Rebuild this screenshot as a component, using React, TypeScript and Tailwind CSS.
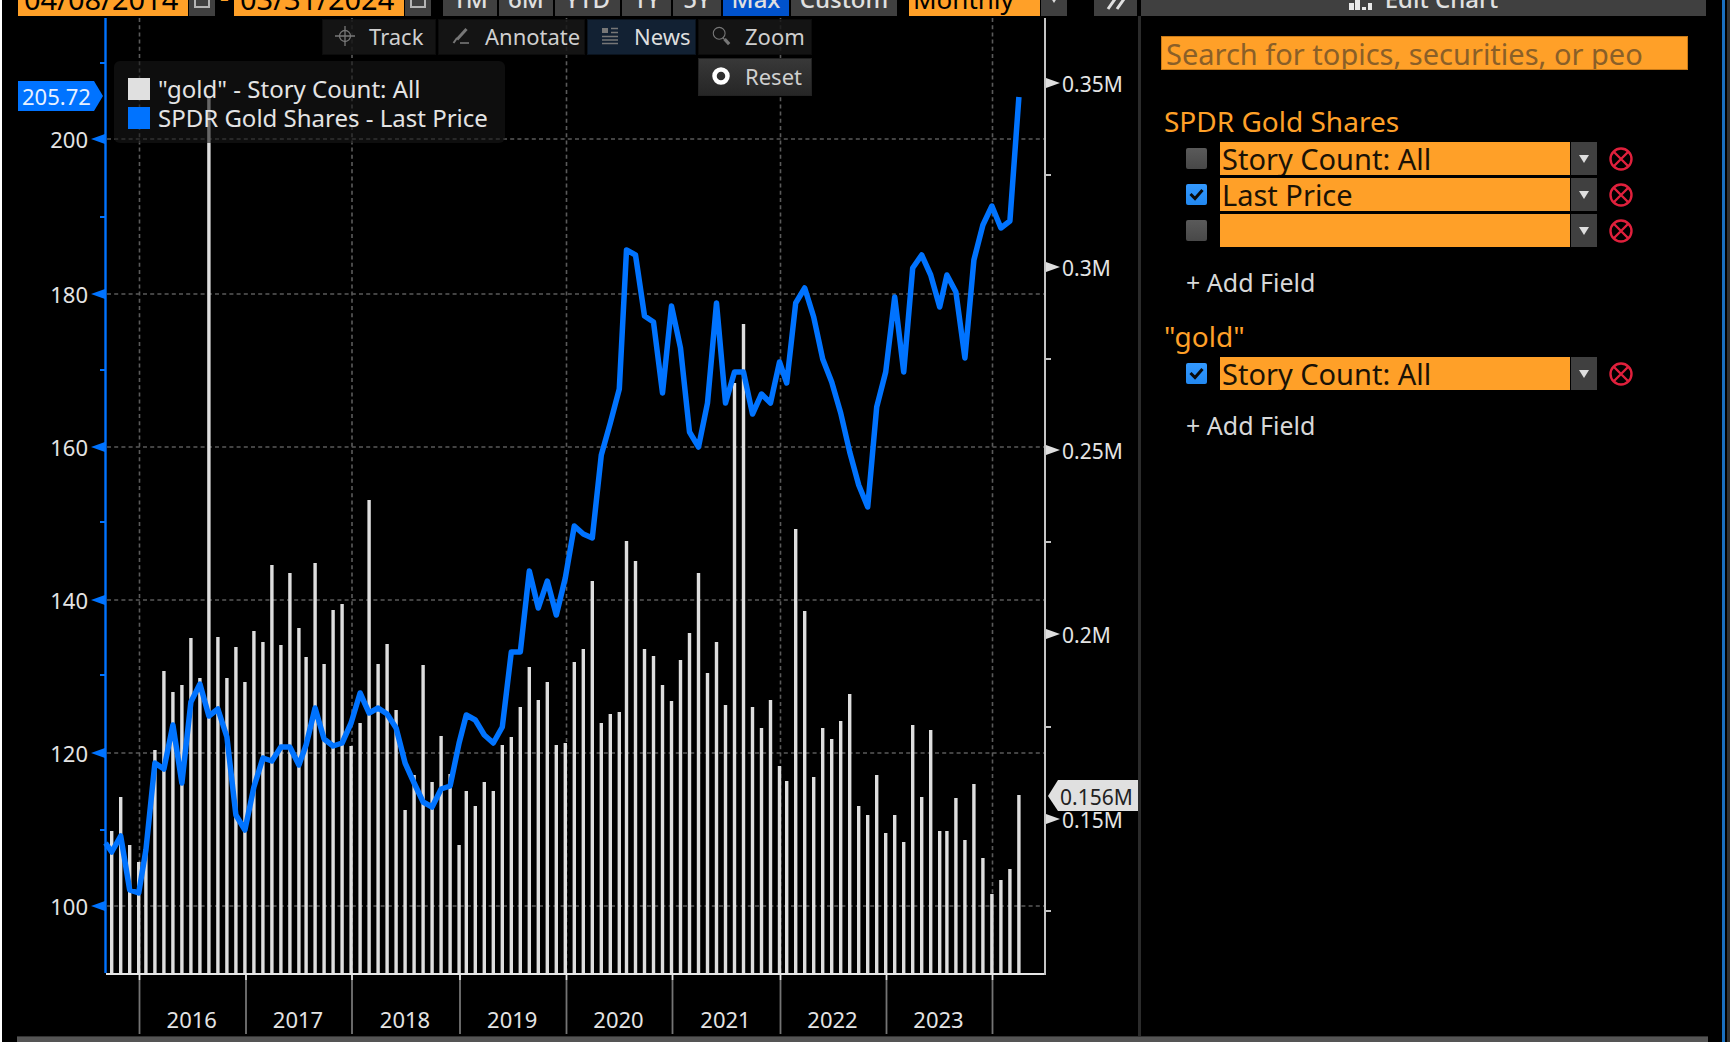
import { clsx } from "clsx";

// y of each month's story count bar, Sep 2015 - Mar 2024
const COUNT_TOPS = [
	831, 797, 845, 862, 850, 750, 671, 692, 685, 638, 678, 97, 637, 678, 647, 682, 631, 642, 565, 645, 573, 628, 657, 563,
	664, 610, 604, 746, 723, 500, 664, 644, 710, 810, 775, 665, 782, 736, 774, 845, 791, 806, 782, 791, 745, 737, 707, 667,
	700, 682, 745, 743, 662, 649, 581, 723, 714, 712, 541, 561, 649, 656, 685, 701, 660, 633, 573, 673, 642, 705, 383, 324,
	707, 728, 700, 766, 781, 529, 611, 777, 728, 739, 721, 694, 806, 815, 775, 833, 815, 842, 725, 797, 730, 831, 831, 798,
	840, 784, 858, 894, 880, 869, 795,
];

const PRICE_POINTS = [
	852, 836, 890, 893, 850, 763, 769, 725, 783, 702, 684, 716, 709, 737, 815, 830, 787, 758, 761, 747, 747, 765, 745, 708,
	739, 746, 743, 723, 693, 713, 708, 714, 728, 763, 783, 802, 807, 789, 786, 743, 715, 720, 735, 743, 727, 652, 652, 571,
	608, 581, 615, 578, 526, 534, 538, 455, 423, 389, 250, 255, 316, 322, 393, 306, 348, 432, 447, 403, 303, 403, 372, 372,
	414, 394, 403, 362, 383, 303, 288, 317, 359, 382, 413, 452, 485, 507, 407, 372, 297, 372, 268, 255, 275, 307, 275, 292,
	358, 260, 225, 206, 228, 221, 97,
];

const PRICE_AXIS = [
	{ label: "200", y: 139 },
	{ label: "180", y: 294 },
	{ label: "160", y: 447 },
	{ label: "140", y: 600 },
	{ label: "120", y: 753 },
	{ label: "100", y: 906 },
];

const COUNT_AXIS = [
	{ label: "0.35M", y: 83 },
	{ label: "0.3M", y: 267 },
	{ label: "0.25M", y: 450 },
	{ label: "0.2M", y: 634 },
	{ label: "0.15M", y: 819 },
];

const YEAR_LINES = [139.5, 246, 352, 460, 566.5, 672.5, 780.5, 886.5, 992.5];
const YEARS = ["2016", "2017", "2018", "2019", "2020", "2021", "2022", "2023"];

const RANGES = [
	{ label: "1M", width: "w-[54px]" },
	{ label: "6M", width: "w-[54px]" },
	{ label: "YTD", width: "w-[65px]" },
	{ label: "1Y", width: "w-[49px]" },
	{ label: "5Y", width: "w-[48px]" },
	{ label: "Max", width: "w-[66px]", active: true },
	{ label: "Custom", width: "w-[106px]" },
];

function monthX(i: number) {
	return 111.7 + 1.8 * (5 * i - Math.floor((i + 14) / 18));
}

function Chart() {
	const line = ["105.5,843", ...PRICE_POINTS.map((y, i) => `${monthX(i)},${y}`)].join(" ");

	return (
		<svg viewBox="2 16 1136 1020" className="block w-full" role="img" aria-label="Gold price and story count">
			<g stroke="#5a5a5a" strokeWidth="1.6" strokeDasharray="4 3.2">
				{PRICE_AXIS.map(({ y }) => (
					<line key={y} x1="107" x2="1044" y1={y} y2={y} />
				))}
				{YEAR_LINES.filter((_, i) => i % 2 === 0).map((x) => (
					<line key={x} x1={x} x2={x} y1="18" y2="973" />
				))}
			</g>

			<g fill="#dedede">
				{COUNT_TOPS.map((y, i) => (
					<rect key={i} x={monthX(i) - 1.7} y={y} width="3.4" height={974 - y} />
				))}
			</g>

			<path d="M106 974H1045" stroke="#e6e6e6" strokeWidth="2" />
			<path d="M1045 18V975" stroke="#c4c4c4" strokeWidth="2" />
			<path d="M105.5 18V973" stroke="#0073ff" strokeWidth="2.4" />
			<polyline points={line} fill="none" stroke="#0073ff" strokeWidth="5.5" strokeLinejoin="round" />

			{YEAR_LINES.map((x) => (
				<g key={x} strokeWidth="1.8">
					<line x1={x} x2={x} y1="980" y2="1034" stroke="#747474" />
					<line x1={x} x2={x} y1="974" y2="980" stroke="#e6e6e6" />
				</g>
			))}

			<path d="M100 63H105M100 217H105M100 370H105M100 522H105M100 675H105M100 830H105" stroke="#0073ff" strokeWidth="2" />
			<path d="M1046 175H1051M1046 359H1051M1046 542H1051M1046 727H1051M1046 911H1051" stroke="#c4c4c4" strokeWidth="2" />

			<g fontSize="22" fill="#e4e4e4">
				{PRICE_AXIS.map(({ label, y }) => (
					<g key={label}>
						<polygon points={`91,${y} 105,${y - 5} 105,${y + 5}`} fill="#0073ff" />
						<text x="88" y={y + 9} textAnchor="end">
							{label}
						</text>
					</g>
				))}
				{COUNT_AXIS.map(({ label, y }) => (
					<g key={label}>
						<polygon points={`1060,${y} 1046,${y - 5} 1046,${y + 5}`} fill="#dedede" />
						<text x="1062" y={y + 9} fontSize="21">
							{label}
						</text>
					</g>
				))}
				{YEARS.map((year, i) => (
					<text key={year} x={(YEAR_LINES[i] + YEAR_LINES[i + 1]) / 2 - 1} y="1028" textAnchor="middle">
						{year}
					</text>
				))}
			</g>

			<polygon points="18,81 94,81 103,96 94,111 18,111" fill="#0073ff" />
			<text x="22" y="105" fontSize="22" fill="#e8f1ff">
				205.72
			</text>
			<polygon points="1048,796 1058,780 1138,780 1138,811 1058,811" fill="#e0e0e0" />
			<text x="1060" y="805" fontSize="21" fill="#222">
				0.156M
			</text>
		</svg>
	);
}

function CrosshairIcon() {
	return (
		<svg viewBox="0 0 20 20" className="size-5" fill="none" stroke="#777" strokeWidth="1.3">
			<circle cx="10" cy="10" r="5.5" />
			<path d="M10 0V20M0 10H20" />
		</svg>
	);
}

function PencilIcon() {
	return (
		<svg viewBox="0 0 20 20" className="size-5" fill="none" stroke="#777">
			<path d="M15.5 3L6 13.5" strokeWidth="3" />
			<path d="M6 12L2.5 17" strokeWidth="2" />
			<path d="M9 17H18" strokeWidth="1.6" />
		</svg>
	);
}

function NewsIcon() {
	return (
		<svg viewBox="0 0 20 20" className="size-5" stroke="#777" strokeWidth="1.6">
			<rect x="2" y="2" width="6" height="5" fill="#777" stroke="none" />
			<path d="M11 2.5H18M11 6.5H18M2 10.5H18M2 14H18M2 17.5H18" />
		</svg>
	);
}

function ZoomIcon() {
	return (
		<svg viewBox="0 0 22 22" className="size-5" fill="none" stroke="#777">
			<circle cx="9" cy="8" r="6.5" strokeWidth="1.2" />
			<path d="M13 13L15 15" strokeWidth="1.5" />
			<path d="M15 14.5L20 20" strokeWidth="3.5" />
		</svg>
	);
}

function ResetIcon() {
	return (
		<svg viewBox="0 0 20 20" className="size-5" fill="none" stroke="#fff" strokeWidth="4.5">
			<circle cx="10" cy="10" r="6.5" />
		</svg>
	);
}

function ChartToolbar() {
	const button = "flex h-9 items-center gap-3.5 border border-black/40 pb-0.5 pl-3";

	return (
		<div className="absolute left-[320px] top-[3px] flex items-start gap-0.5 text-[22px] text-[#cfcfcf]">
			<button className={clsx(button, "w-[114px] bg-[#181818]/85")}>
				<CrosshairIcon />
				Track
			</button>
			<button className={clsx(button, "w-[147px] bg-[#181818]/85")}>
				<PencilIcon />
				Annotate
			</button>
			<button className={clsx(button, "w-[109px] bg-[#122133] text-[#dedede]")}>
				<NewsIcon />
				News
			</button>
			<div className="flex flex-col gap-[3px]">
				<button className={clsx(button, "w-[114px] bg-[#181818]/85")}>
					<ZoomIcon />
					Zoom
				</button>
				<button className="flex h-[38px] w-[114px] items-center gap-3.5 border border-[#222] bg-linear-to-b from-[#383838] to-[#262626] pb-0.5 pl-3">
					<ResetIcon />
					Reset
				</button>
			</div>
		</div>
	);
}

function Legend() {
	return (
		<ul className="absolute left-[112px] top-[45px] h-[82px] w-[391px] rounded-md bg-[#171717]/60 px-3.5 py-[13px] text-2xl leading-[29px] text-[#e4e4e4]">
			<li className="flex items-center gap-2">
				<span className="size-[22px] bg-[#e0e0e0]" />
				"gold" - Story Count: All
			</li>
			<li className="flex items-center gap-2 whitespace-nowrap">
				<span className="size-[22px] bg-[#0073ff]" />
				SPDR Gold Shares - Last Price
			</li>
		</ul>
	);
}

function DateField({ label, value }: { label: string; value: string }) {
	return (
		<div className="flex h-[34px] gap-px">
			<input
				aria-label={label}
				defaultValue={value}
				className="w-[170px] bg-[#ffa028] px-1.5 text-[29px] text-black outline-none"
			/>
			<button aria-label={`Pick ${label}`} className="flex w-[26px] items-end justify-center bg-[#404040] pb-2">
				<span className="h-5 w-4 border-2 border-[#b5b5b5]" />
			</button>
		</div>
	);
}

function Header() {
	return (
		<header className="flex h-4 items-end overflow-hidden pl-4 text-2xl font-medium text-[#e0e0e0]">
			<div className="flex min-w-0 flex-1 items-end">
				<div className="flex items-end font-normal">
					<DateField label="start date" value="04/08/2014" />
					<span className="w-[19px] pb-0.5 text-center text-[29px] leading-[34px] text-[#ffa028]">-</span>
					<DateField label="end date" value="03/31/2024" />
				</div>
				<div className="ml-3 flex gap-0.5">
					{RANGES.map(({ label, width, active }) => (
						<button key={label} className={clsx("h-[34px]", width, active ? "bg-[#0052cc]" : "bg-[#404040]")}>
							{label}
						</button>
					))}
				</div>
				<div className="relative ml-3">
					<select
						aria-label="Period"
						className="block h-[34px] w-[158px] appearance-none bg-[#ffa028] pl-1 text-[26px] font-normal text-black"
					>
						<option>Monthly</option>
					</select>
					<ArrowBox />
				</div>
				<button
					aria-label="Collapse panel"
					className="ml-auto mr-1 flex h-[34px] w-[43px] items-end justify-center bg-[#404040] pb-1.5"
				>
					<svg viewBox="0 0 22 22" className="size-[22px]" fill="none" stroke="#e0e0e0" strokeWidth="3">
						<path d="M3 2L10 11L3 21M12 2L19 11L12 21" />
					</svg>
				</button>
			</div>
			<div className="w-[581px] shrink-0 pr-4">
				<button className="flex h-[34px] w-full items-center justify-center gap-3 bg-[#404040]">
					<svg viewBox="0 0 24 24" className="size-6" fill="#e8e8e8">
						<path d="M0 16H5V23H0ZM6 13H11V23H6ZM13 20H17V23H13ZM19 16H23V23H19Z" />
					</svg>
					Edit Chart
				</button>
			</div>
		</header>
	);
}

function ArrowBox() {
	return (
		<span className="pointer-events-none absolute inset-y-0 right-0 flex w-[27px] items-center justify-center border-l border-black bg-[#404040]">
			<svg viewBox="0 0 10 8" className="h-2 w-2.5" fill="#dedede">
				<path d="M0 0H10L5 8Z" />
			</svg>
		</span>
	);
}

function FieldRow({ value, checked }: { value: string; checked?: boolean }) {
	return (
		<div className="flex items-center">
			<span className="relative flex size-[21px]">
				<input
					type="checkbox"
					aria-label={`Show ${value || "empty field"}`}
					defaultChecked={checked}
					className="peer size-[21px] appearance-none rounded-xs bg-linear-to-b from-[#5a5a5a] to-[#484848] checked:from-[#3399ff] checked:to-[#2288f0]"
				/>
				<svg
					viewBox="0 0 21 21"
					className="pointer-events-none absolute inset-0 hidden peer-checked:block"
					fill="none"
					stroke="#0a0a0a"
					strokeWidth="3"
				>
					<path d="M4.5 10L9 14.5L16.5 6" />
				</svg>
			</span>
			<div className="relative ml-[13px] w-[377px]">
				<select
					aria-label="Field"
					className="block h-[33px] w-full appearance-none bg-[#ffa028] pl-0.5 text-[29px] leading-[33px] text-[#1a1206]"
				>
					<option>{value}</option>
				</select>
				<ArrowBox />
			</div>
			<button aria-label="Remove field" className="ml-3">
				<svg viewBox="0 0 24 24" className="size-6" fill="none" stroke="#e0203c" strokeWidth="2.4">
					<circle cx="12" cy="12" r="10.5" />
					<path d="M5 5L19 19M19 5L5 19" />
				</svg>
			</button>
		</div>
	);
}

function FieldGroup({ title, fields }: { title: string; fields: { value: string; checked?: boolean }[] }) {
	return (
		<section>
			<h2 className="pl-[3px] text-[28px] leading-9 text-[#ffa028]">{title}</h2>
			<div className="mt-[3px] flex flex-col gap-[3px] pl-[25px]">
				{fields.map((field, i) => (
					<FieldRow key={i} {...field} />
				))}
			</div>
			<button className="ml-[25px] mt-[19px] block text-[25px] leading-8 text-[#d8d8d8]">+ Add Field</button>
		</section>
	);
}

function EditPanel() {
	return (
		<aside className="w-[584px] shrink-0 border-l-3 border-[#2b2b2b] pl-5 pr-[34px] pt-5">
			<input
				type="text"
				aria-label="Search"
				placeholder="Search for topics, securities, or people"
				className="block h-[34px] w-full border border-[#c97a18] bg-[#ffa028] pl-1 pr-[43px] text-[29px] leading-8 outline-none placeholder:text-[#8a5f28]"
			/>
			<div className="mt-[33px] flex flex-col gap-5">
				<FieldGroup
					title="SPDR Gold Shares"
					fields={[{ value: "Story Count: All" }, { value: "Last Price", checked: true }, { value: "" }]}
				/>
				<FieldGroup title={'"gold"'} fields={[{ value: "Story Count: All", checked: true }]} />
			</div>
		</aside>
	);
}

export default function App() {
	return (
		<div className="flex min-h-screen border-b-2 border-l-2 border-white bg-black font-['Noto_Sans',sans-serif]">
			<div className="flex min-w-0 flex-1 flex-col">
				<Header />
				<div className="flex flex-1">
					<main className="relative min-w-0 flex-1">
						<Chart />
						<Legend />
						<ChartToolbar />
					</main>
					<EditPanel />
				</div>
				<div className="ml-[15px] mr-3.5 h-1.5 border-t border-[#333] bg-[#555]" />
			</div>
			<div className="w-2 shrink-0 border-l-3 border-r-3 border-l-[#1a6fbf] border-r-[#333]" />
		</div>
	);
}
